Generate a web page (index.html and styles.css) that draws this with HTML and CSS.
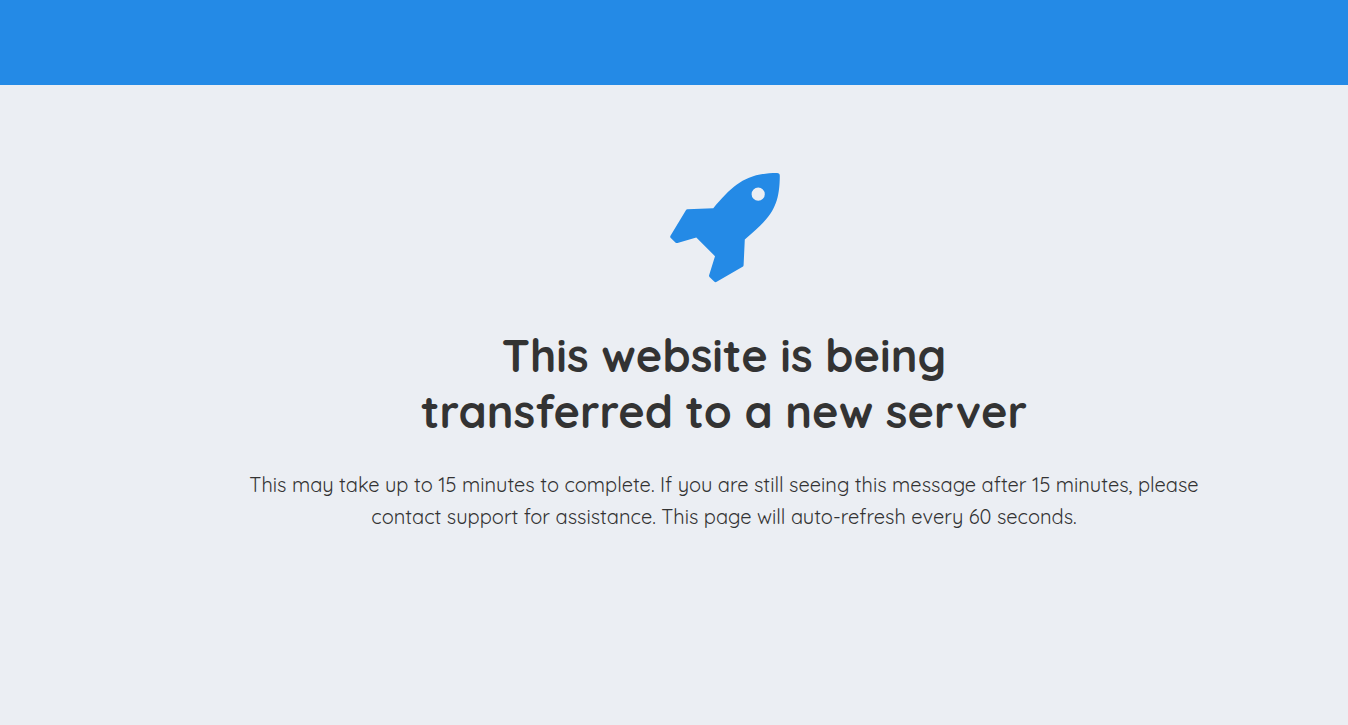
FILE: index.html
```html
<!DOCTYPE html>
<html lang="en">
<head>
  <meta charset="utf-8">
  <meta name="viewport" content="width=device-width, initial-scale=1">
  <meta http-equiv="refresh" content="60">
  <title>Website transfer in progress</title>
  <link rel="stylesheet" href="styles.css">
</head>
<body>
  <header class="top-bar"></header>

  <main class="content">
    <svg class="rocket" viewBox="-2 0 112 110" aria-hidden="true">
      <path fill-rule="evenodd" d="M43.300 35.300C63 12 76 0 107 0Q109.800 0 109.800 2.800C109.600 33 102 44 74.800 66.400L73.600 92.200Q73.500 93.200 72.600 93.700L46.700 108.800Q45.300 109.600 44.200 108.500L39.500 104Q38.800 103.300 39.100 102.300L45 83.200L26.300 64.500L7.500 70Q6.300 70.400 5.400 69.500L.8 65Q-.2 64 .5 62.800L15.900 37.200Q16.400 36.300 17.400 36.300ZM94.800 21.200A6.600 6.600 0 1 0 81.600 21.200A6.600 6.600 0 1 0 94.800 21.200Z"/>
    </svg>
    <h1 class="title">This website is being<br>transferred to a new server</h1>
    <p class="message">This may take up to 15 minutes to complete. If you are still seeing this message after 15 minutes, please contact support for assistance. This page will auto-refresh every 60 seconds.</p>
  </main>
</body>
</html>
```

FILE: styles.css
```css
* {
  box-sizing: border-box;
}

body {
  margin: 0;
  background: #ebeef3;
  color: #333;
  font-family: Quicksand, Lato, sans-serif;
}

.top-bar {
  height: 85px;
  background: #248ae6;
}

.content {
  margin-left: 100px;
  padding: 88px 100px;
  display: flex;
  flex-direction: column;
  align-items: center;
  text-align: center;
}

.rocket {
  width: 112px;
  height: 110px;
  fill: #248ae6;
}

.title {
  margin: 44px 0 30px;
  font-size: 45px;
  font-weight: 700;
  line-height: 56px;
}

.message {
  max-width: 960px;
  margin: 0;
  font-size: 20px;
  font-weight: 400;
  line-height: 32px;
}
```
